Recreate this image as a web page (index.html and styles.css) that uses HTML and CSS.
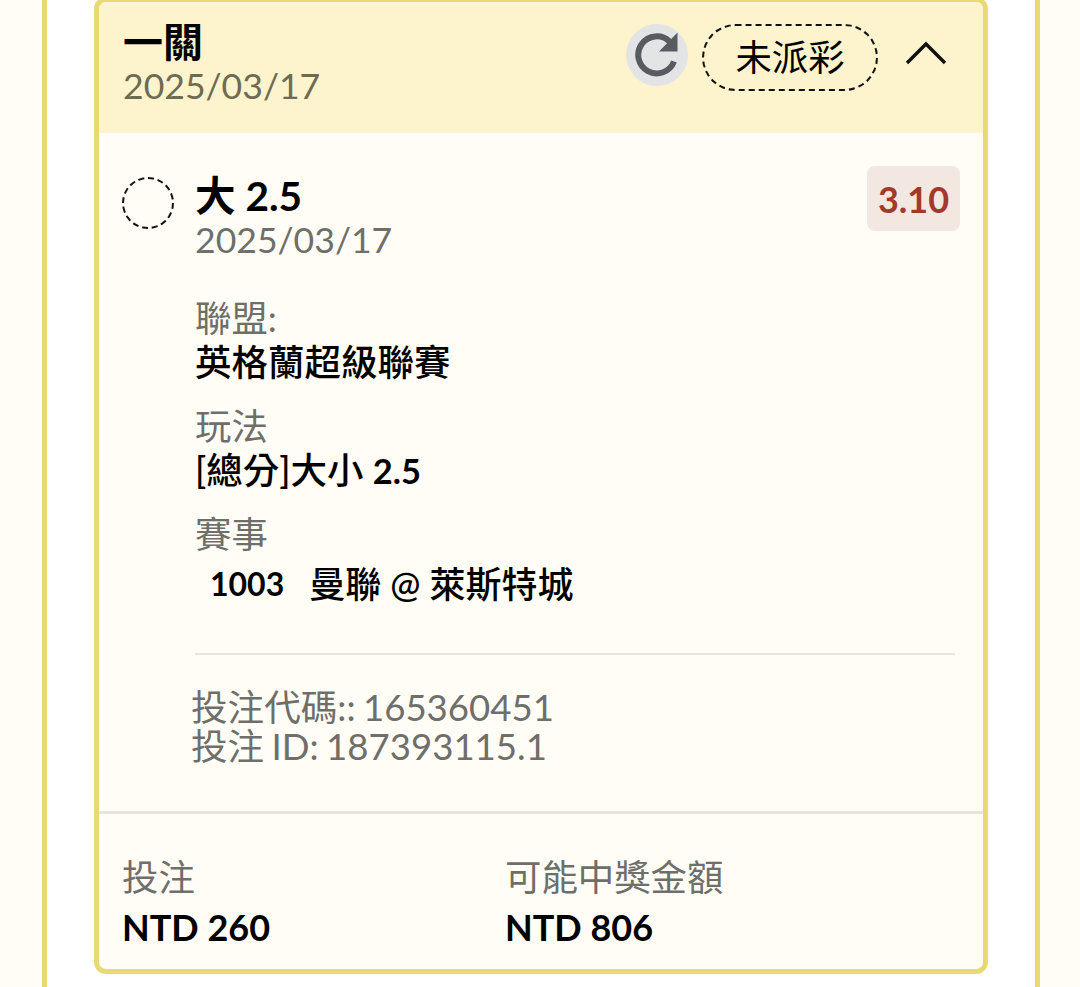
FILE: index.html
```html
<!DOCTYPE html>
<html lang="zh-Hant">

<head>
    <meta charset="UTF-8">
    <meta name="viewport" content="width=device-width, initial-scale=1.0">
    <title>投注</title>
    <link rel="stylesheet" href="styles.css">
</head>

<body>
    <div class="frame">
        <div class="bet-card">
            <div class="bet-header">
                <div class="bet-title">
                    <div class="title-name">一關</div>
                    <div class="title-date">2025/03/17</div>
                </div>
                <div class="header-actions">
                    <span class="refresh">
                        <svg width="46" height="46" viewBox="0 0 46 46">
                            <path d="M40 29.5A18.5 18.5 0 1 1 35.5 9.5" fill="none" stroke="#585c60" stroke-width="6" />
                            <path d="M43.5 .5V19.5H25Z" fill="#585c60" />
                        </svg>
                    </span>
                    <span class="status">未派彩</span>
                    <svg class="chevron" width="42" height="24" viewBox="0 0 42 24">
                        <path d="M2 22L21 3L40 22" fill="none" stroke="#111" stroke-width="3.4" />
                    </svg>
                </div>
            </div>

            <div class="bet-body">
                <div class="pick">
                    <span class="pick-mark"></span>
                    <div class="pick-info">
                        <div class="pick-name">大 2.5</div>
                        <div class="pick-date">2025/03/17</div>
                    </div>
                    <span class="odds">3.10</span>
                </div>

                <div class="details">
                    <div class="detail">
                        <div class="detail-label">聯盟:</div>
                        <div class="detail-value">英格蘭超級聯賽</div>
                    </div>
                    <div class="detail">
                        <div class="detail-label">玩法</div>
                        <div class="detail-value">[總分]大小 <span class="num">2.5</span></div>
                    </div>
                    <div class="detail">
                        <div class="detail-label">賽事</div>
                        <div class="detail-value match"><span class="match-no">1003</span><span>曼聯 @ 萊斯特城</span></div>
                    </div>
                </div>

                <div class="codes">
                    <div>投注代碼:: 165360451</div>
                    <div>投注 ID: 187393115.1</div>
                </div>
            </div>

            <div class="bet-footer">
                <div class="amount">
                    <div class="amount-label">投注</div>
                    <div class="amount-value">NTD 260</div>
                </div>
                <div class="amount">
                    <div class="amount-label">可能中獎金額</div>
                    <div class="amount-value">NTD 806</div>
                </div>
            </div>
        </div>
    </div>
</body>

</html>
```

FILE: styles.css
```css
html,
body {
    height: 987px;
    overflow: hidden;
}

body {
    margin: 0;
    padding: 0;
    background-color: #fffdf5;
    color: #000;
    font-family: Lato, "Noto Sans CJK TC", sans-serif;
    font-size: 36.4px;
}

.frame {
    display: flow-root;
    box-sizing: border-box;
    width: 998px;
    height: 987px;
    margin-left: 42px;
    padding: 0 47px;
    background-color: #fff;
    border-left: 5px solid #e9d974;
    border-right: 5px solid #e9d974;
}

.bet-card {
    box-sizing: border-box;
    width: 894px;
    height: 977px;
    margin-top: -3px;
    background-color: #fffdf5;
    border: 5px solid #e9d974;
    border-radius: 12px;
    overflow: hidden;
}

.bet-header {
    display: flex;
    justify-content: space-between;
    height: 131px;
    padding: 0 36px 0 24px;
    background-color: #fdf3cd;
}

.bet-title {
    padding-top: 17px;
}

.title-name {
    height: 47px;
    line-height: 46px;
    font-size: 40px;
    font-weight: 700;
}

.title-date {
    height: 40px;
    line-height: 40px;
    font-size: 35.6px;
    color: #6f6a52;
}

.header-actions {
    display: flex;
    align-items: flex-start;
}

.refresh {
    display: flex;
    align-items: center;
    justify-content: center;
    width: 62px;
    height: 62px;
    margin-top: 22px;
    border-radius: 50%;
    background-color: #e3e4e6;
}

.status {
    box-sizing: border-box;
    width: 176px;
    height: 67px;
    margin-top: 22px;
    margin-left: 14px;
    line-height: 63px;
    text-align: center;
    border: 2px dashed #111;
    border-radius: 34px;
}

.chevron {
    margin-top: 39px;
    margin-left: 27px;
}

.bet-body {
    padding: 33px 23px 0 23px;
}

.pick {
    display: flex;
    align-items: flex-start;
}

.pick-mark {
    box-sizing: border-box;
    flex: none;
    width: 52px;
    height: 52px;
    margin-top: 11px;
    border: 2px dashed #111;
    border-radius: 50%;
}

.pick-info {
    flex: 1;
    margin-left: 21px;
}

.pick-name {
    height: 48px;
    line-height: 60px;
    font-size: 40.6px;
    font-weight: 700;
}

.pick-date {
    height: 48px;
    line-height: 52px;
    font-size: 35.6px;
    color: #6e6e6a;
}

.odds {
    width: 93px;
    height: 65px;
    line-height: 66px;
    text-align: center;
    font-size: 36px;
    color: #a23a2c;
    font-weight: 700;
    background-color: #f3e7e2;
    border-radius: 8px;
}

.details {
    margin-left: 73px;
    margin-top: 34px;
    margin-right: 5px;
    padding-bottom: 47px;
    border-bottom: 2px solid #e6e4de;
}

.detail {
    margin-bottom: 20px;
}

.detail:last-child {
    margin-bottom: 0;
}

.detail-label {
    height: 44px;
    line-height: 44px;
    color: #6e6e6a;
}

.detail-value {
    height: 44px;
    line-height: 44px;
    font-size: 36.5px;
    font-weight: 500;
}

.num {
    font-size: 34.5px;
    font-weight: 700;
}

.match {
    display: flex;
    margin-top: 6px;
    padding-left: 15px;
    gap: 25px;
    font-size: 36px;
}

.match-no {
    font-size: 32px;
    font-weight: 700;
}

.codes {
    margin-left: 69px;
    margin-top: 33px;
    padding-bottom: 45px;
    line-height: 39px;
    font-size: 36.6px;
    word-spacing: -2px;
    color: #6e6e6a;
}

.bet-footer {
    display: flex;
    padding: 40px 23px 0;
    border-top: 3px solid #e6e4de;
}

.amount {
    width: 383px;
}

.amount-label {
    height: 47px;
    line-height: 46px;
    color: #6e6e6a;
}

.amount-value {
    height: 52px;
    line-height: 52px;
    font-size: 36px;
    font-weight: 700;
}
```
